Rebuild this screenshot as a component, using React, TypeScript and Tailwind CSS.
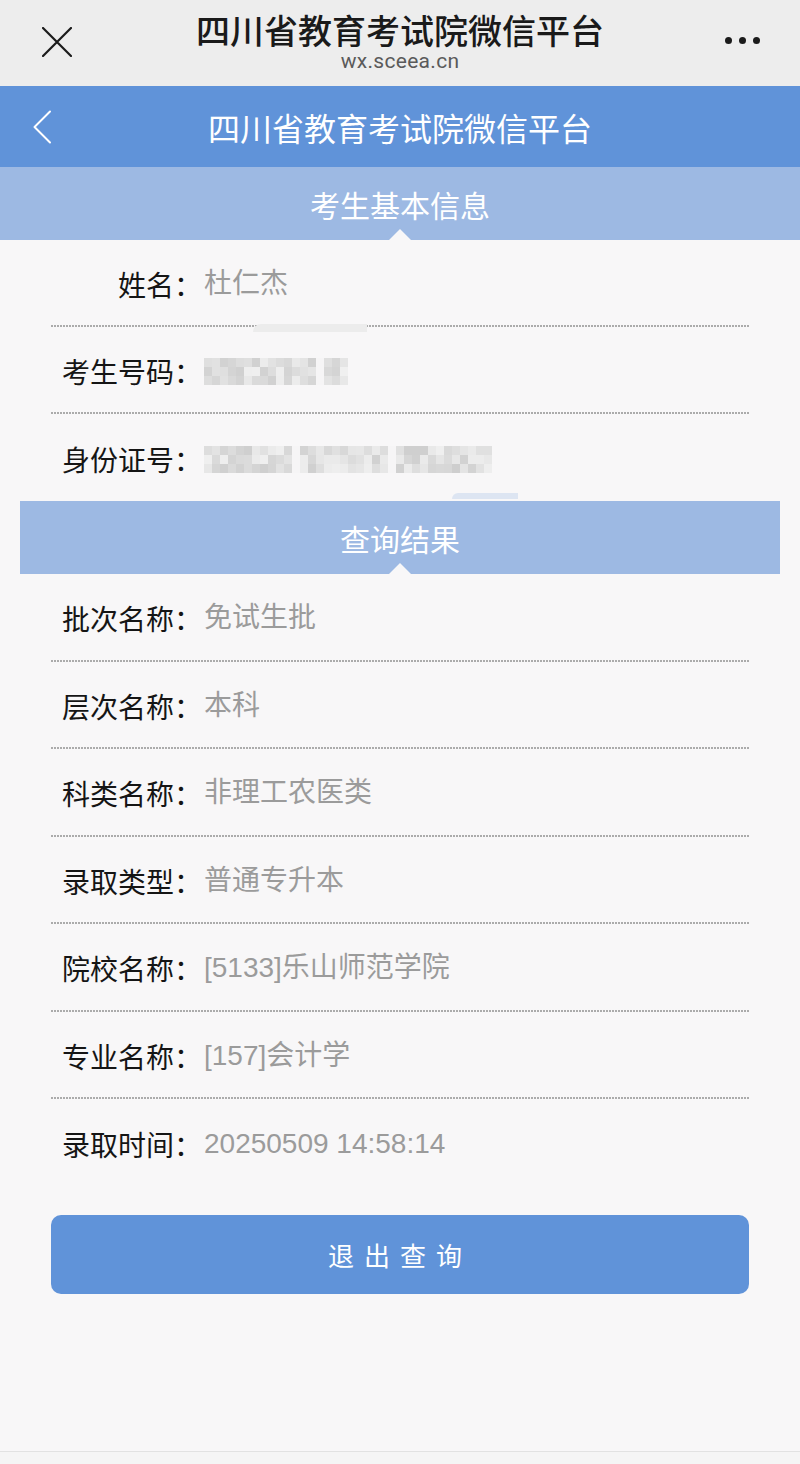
import React from "react";

function Mosaic({ cols, rows, seed, blanks }: { cols: number; rows: number; seed: number; blanks: number[] }) {
  let s = seed;
  const rnd = () => {
    s = (s * 9301 + 49297) % 233280;
    return s / 233280;
  };
  const cells: string[] = [];
  for (let r = 0; r < rows; r++) {
    for (let c = 0; c < cols; c++) {
      if (blanks.includes(c)) {
        cells.push("#f6f5f6");
      } else {
        const v = Math.round(206 + rnd() * 34);
        cells.push(`rgb(${v},${v},${v})`);
      }
    }
  }
  return (
    <div
      className="grid"
      style={{ gridTemplateColumns: `repeat(${cols}, 8px)`, gridAutoRows: "9px" }}
    >
      {cells.map((c, i) => (
        <div key={i} style={{ backgroundColor: c }} />
      ))}
    </div>
  );
}

function Divider() {
  return (
    <div className="h-[2px] w-full bg-[repeating-linear-gradient(90deg,#ababab_0px,#ababab_2px,transparent_2px,transparent_3px)]" />
  );
}

function Row({
  label,
  value,
  last,
  h,
  children,
}: {
  label: string;
  value?: string;
  last?: boolean;
  h: "a" | "b";
  children?: React.ReactNode;
}) {
  const height = h === "a" ? "h-[85px]" : "h-[85.5px]";
  return (
    <div>
      <div className={`flex items-center pt-[3px] ${last ? "h-[87px]" : height}`}>
        <div className="w-[151px] shrink-0 text-right text-[28px] leading-[36px] text-[#151515]">
          {label}：
        </div>
        {value !== undefined ? (
          <div className="pl-[2px] font-['Liberation_Sans','Noto_Sans_CJK_SC',sans-serif] text-[28px] leading-[36px] text-[#9b9b9b]">
            {value}
          </div>
        ) : (
          <div className="pl-[2px]">{children}</div>
        )}
      </div>
      {last ? null : <Divider />}
    </div>
  );
}

function SectionHeader({ title, inset }: { title: string; inset?: boolean }) {
  return (
    <div
      className={`relative flex h-[73px] items-center justify-center bg-[#9db9e3] ${
        inset ? "mx-[20px]" : ""
      }`}
    >
      <span className="text-[30px] leading-[36px] text-white">{title}</span>
      <div className="absolute bottom-0 left-1/2 h-0 w-0 -translate-x-1/2 border-l-[11px] border-r-[11px] border-b-[11px] border-l-transparent border-r-transparent border-b-[#f8f7f8]" />
    </div>
  );
}

export default function App() {
  return (
    <div className="flex h-[1464px] w-[800px] flex-col bg-[#f8f7f8] font-['Noto_Sans_CJK_SC',sans-serif]">
      {/* WeChat top bar */}
      <div className="grid h-[86px] shrink-0 grid-cols-[114px_1fr_114px] bg-[#ededed]">
        <div className="pl-[42px] pt-[27px]">
          <svg width="30" height="30" viewBox="0 0 30 30">
            <path d="M1 1 L29 29 M29 1 L1 29" stroke="#1b1b1b" strokeWidth="2.2" strokeLinecap="round" />
          </svg>
        </div>
        <div className="flex flex-col items-center pt-[13px]">
          <div className="text-[34px] font-medium leading-[34px] text-[#1a1a1a]">四川省教育考试院微信平台</div>
          <div className="mt-[3px] font-['Roboto','Liberation_Sans',sans-serif] text-[21px] leading-[22px] tracking-[0.3px] text-[#5a5a5a]">
            wx.sceea.cn
          </div>
        </div>
        <div className="flex gap-[7px] pl-[39px] pt-[37px]">
          <div className="h-[7px] w-[7px] rounded-full bg-[#1b1b1b]" />
          <div className="h-[7px] w-[7px] rounded-full bg-[#1b1b1b]" />
          <div className="h-[7px] w-[7px] rounded-full bg-[#1b1b1b]" />
        </div>
      </div>

      {/* Blue header */}
      <div className="grid h-[81px] shrink-0 grid-cols-[100px_1fr_100px] items-center bg-[#6093d9]">
        <div className="pl-[32px]">
          <svg width="20" height="34" viewBox="0 0 20 34">
            <path d="M18 1.5 L2.5 17 L18 32.5" fill="none" stroke="#ffffff" strokeWidth="2" strokeLinejoin="round" strokeLinecap="round" />
          </svg>
        </div>
        <div className="text-center text-[32px] leading-[40px] text-white">四川省教育考试院微信平台</div>
        <div />
      </div>

      <SectionHeader title="考生基本信息" />
      <div className="px-[51px]">
        <Row label="姓名" value="杜仁杰" h="a" />
        <div className="relative">
          <div className="absolute left-[202px] top-[-3px] h-[8px] w-[114px] rounded-tl-[40px] bg-[#ececec]" />
        </div>
        <Row label="考生号码" h="a">
          <Mosaic cols={18} rows={3} seed={7} blanks={[14]} />
        </Row>
        <Row label="身份证号" h="a" last>
          <Mosaic cols={36} rows={3} seed={31} blanks={[11, 23]} />
        </Row>
        <div className="relative">
          <div className="absolute left-[401px] top-[-8px] h-[6px] w-[66px] rounded-tl-[20px] bg-[#dde5f2]" />
        </div>
      </div>

      <SectionHeader title="查询结果" inset />
      <div className="px-[51px]">
        <Row label="批次名称" value="免试生批" h="b" />
        <Row label="层次名称" value="本科" h="b" />
        <Row label="科类名称" value="非理工农医类" h="b" />
        <Row label="录取类型" value="普通专升本" h="b" />
        <Row label="院校名称" value="[5133]乐山师范学院" h="b" />
        <Row label="专业名称" value="[157]会计学" h="b" />
        <Row label="录取时间" value="20250509 14:58:14" h="b" last />
      </div>

      <div className="mx-[51px] mt-[29px] flex h-[79px] items-center justify-center rounded-[10px] bg-[#6093d9]">
        <span className="text-[26px] leading-[32px] tracking-[10px] text-white">退出查询</span>
      </div>

      <div className="flex-1" />
      <div className="h-[13px] shrink-0 border-t border-[#e2e2e2] bg-[#f5f5f5]" />
    </div>
  );
}
